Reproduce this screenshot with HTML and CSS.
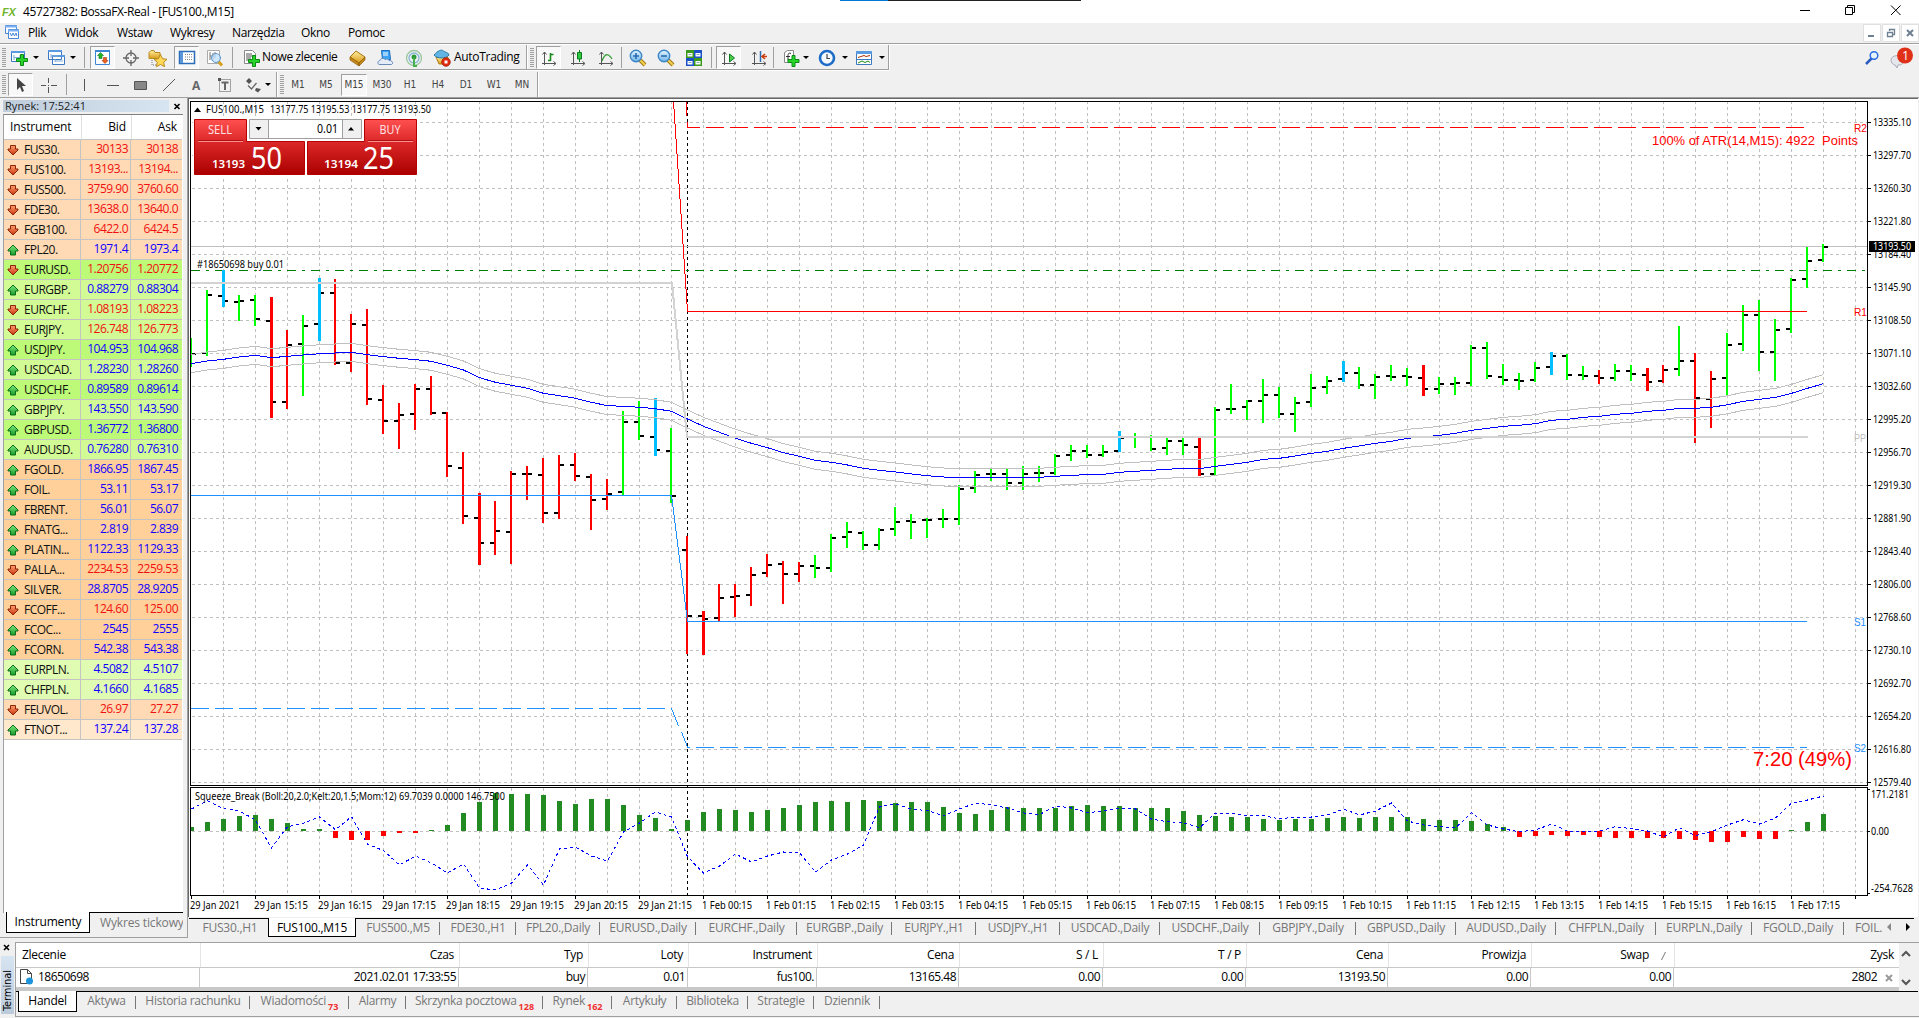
FILE: index.html
```html
<!DOCTYPE html>
<html lang="pl">
<head>
<meta charset="utf-8">
<title>45727382: BossaFX-Real - [FUS100.,M15]</title>
<link rel="stylesheet" href="styles.css">
</head>
<body>
<svg class="defs" width="0" height="0">
  <defs>
    <linearGradient id="gold" x1="0" y1="0" x2="0" y2="1"><stop offset="0" stop-color="#fff0a0"/><stop offset="1" stop-color="#d99a18"/></linearGradient>
    <linearGradient id="sky" x1="0" y1="0" x2="0" y2="1"><stop offset="0" stop-color="#e4f5ff"/><stop offset="1" stop-color="#6fb4ea"/></linearGradient>
    <linearGradient id="leaf" x1="0" y1="0" x2="0" y2="1"><stop offset="0" stop-color="#7fe87f"/><stop offset="1" stop-color="#189a28"/></linearGradient>
    <linearGradient id="fire" x1="0" y1="0" x2="0" y2="1"><stop offset="0" stop-color="#ffa070"/><stop offset="1" stop-color="#c8320a"/></linearGradient>
    <linearGradient id="deal" x1="0" y1="0" x2="0" y2="1"><stop offset="0" stop-color="#ff5050"/><stop offset=".4" stop-color="#dc2828"/><stop offset="1" stop-color="#ab0000"/></linearGradient>
    <symbol id="plus" viewBox="0 0 12 12"><path d="M4.5.5h3v4h4v3h-4v4h-3v-4h-4v-3h4z" fill="#28d428" stroke="#0a8a14"/></symbol>
    <symbol id="axes" viewBox="0 0 18 18"><path d="M4.500 3v13M2.500 5.500l2-2.500 2 2.500M2 14.500h13.500M13.500 12.500l2.500 2-2.500 2" fill="none" stroke="#555"/></symbol>
    <symbol id="up" viewBox="0 0 12 12"><path d="M6 1l5 5v1H8.500v4h-5V7H1V6z" fill="url(#leaf)" stroke="#0b6e1d"/></symbol>
    <symbol id="down" viewBox="0 0 12 12"><path d="M6 11l5-5V5H8.500V1.500h-5V5H1v1z" fill="url(#fire)" stroke="#8c2204"/></symbol>
    <symbol id="lens" viewBox="0 0 18 18"><path d="M11 11l5 5" stroke="#a07a18" stroke-width="4"/><path d="M11 11l5 5" stroke="#f4d050" stroke-width="2"/><circle cx="7" cy="7" r="5.700" fill="url(#sky)" stroke="#3c86c8" stroke-width="1.400"/></symbol>
  </defs>
</svg>

<header class="titlebar">
  <span class="logo">FX</span>
  <span class="caption">45727382: BossaFX-Real - [FUS100.,M15]</span>
  <span class="accent"></span><span class="accent-dark"></span>
  <svg class="winbtns" width="110" height="23"><path d="M7 10.500h10" stroke="#000"/><path d="M52.500 7.500h7v7h-7zM54.500 7.500v-2h7v7h-2" fill="none" stroke="#000"/><path d="M98 5.500l9.500 9.500M107.500 5.500L98 15" stroke="#000"/></svg>
</header>

<nav class="menubar">
  <svg width="28" height="20"><g fill="#fff" stroke="#4a86d8"><path d="M5.500 2.500h11v8h-11z"/><path d="M8.500 6.500h10v9h-10z"/></g><path d="M5 3.500h12M8 7.500h11" stroke="#7ab0f0" stroke-width="2"/><path d="M10 10l1.500 3 1.500-3 1.500 3 1.500-3 1 3" fill="none" stroke="#4a86d8"/></svg>
  <span>Plik</span><span>Widok</span><span>Wstaw</span><span>Wykresy</span><span>Narzędzia</span><span>Okno</span><span>Pomoc</span>
  <svg class="mdi" width="56" height="19"><g fill="#fff" stroke="#e0e0e0"><path d="M.5 1.500h17v17H.500zM19.500 1.500h17v17h-17zM38.500 1.500h17v17h-17z"/></g><path d="M5 13h6" stroke="#6d7f90" stroke-width="2"/><path d="M24.500 9.500h5v4h-5zM26.500 8V6.500h5v5H30M24 9.500h6M26 6.500h6" fill="none" stroke="#6d7f90" stroke-width="1.300"/><path d="M44 7l6 6M50 7l-6 6" stroke="#6d7f90" stroke-width="2"/></svg>
</nav>

<div class="toolbar row1">
  <i class="grip m2"></i>
  <svg class="ic m5"><path d="M.5 2.500h13v10H.500z" fill="#fff" stroke="#3c78c0"/><path d="M0 3h14" stroke="#5a9ae0" stroke-width="2"/><path d="M3 6v5M3 8.500h8M9 6v3" stroke="#7aa8d8"/><use href="#plus" x="5" y="5" width="12" height="12"/></svg>
  <i class="drop m4"></i>
  <svg class="ic m9"><path d="M.5 1.500h13v9H.500zM4.500 6.500h12v9h-12z" fill="#fff" stroke="#3c78c0"/><path d="M0 2h14M4 7h13" stroke="#5a9ae0" stroke-width="2"/><path d="M3 5v4M3 7h7M7 10v3M7 12h8" stroke="#7aa8d8"/></svg>
  <i class="drop m4"></i>
  <i class="sep m8"></i>
  <span class="pressed m5"><svg class="ic"><path d="M1.500 1.500h14v14h-14z" fill="#fff" stroke="#3c86d8"/><path d="M1 2h15" stroke="#3c86d8" stroke-width="2"/><path d="M6.500 3.500l3 3H8v3H5v-3H3.500z" fill="#28b428" stroke="#0b7a1d" stroke-width=".6"/><path d="M11 14.500l3-3h-1.500v-3h-3v3H8z" fill="#f06020" stroke="#a83008" stroke-width=".6"/></svg></span>
  <svg class="ic m7"><circle cx="9" cy="9" r="5" fill="none" stroke="#666" stroke-width="1.300"/><path d="M9 1v6M9 11v6M1 9h6M11 9h6" stroke="#666" stroke-width="1.300"/></svg>
  <svg class="ic w20 m8"><path d="M1 3.500l2-2h3l1 2h5v6H1z" fill="url(#gold)" stroke="#b88a20"/><path d="M4 11v5h5" fill="none" stroke="#777" stroke-dasharray="1 1"/><path d="M12.500 5.500l2 4.200 4.500.6-3.300 3 .9 4.400-4.100-2.200-4.100 2.200.9-4.400-3.300-3 4.500-.6z" fill="#ffd858" stroke="#b88a20"/></svg>
  <span class="pressed m6"><svg class="ic"><path d="M1.500 2.500h15v12h-15z" fill="#fff" stroke="#2c6cb8" stroke-width="1.500"/><path d="M3.500 3v11" stroke="#5a96d8" stroke-width="3"/><path d="M7 5.500h8M7 8h8M7 10.500h8" stroke="#888" stroke-dasharray="1 1"/></svg></span>
  <svg class="ic m7"><path d="M1.500 1.500h12v13h-12z" fill="#fff" stroke="#aaa"/><path d="M4 3v8M4 7h4M7 4v8M9 3v6" stroke="#777"/><path d="M12 12l4 4.500" stroke="#d8a020" stroke-width="3"/><circle cx="10" cy="9" r="4.500" fill="#bfe0ff" fill-opacity=".75" stroke="#5a9ad0"/></svg>
  <i class="sep m8"></i>
  <svg class="ic m10"><path d="M1.500 1.500h8l3 3v10h-11z" fill="#fff" stroke="#888"/><path d="M3 5h6M3 7h7M3 9h5M3 11h4" stroke="#555"/><use href="#plus" x="5" y="6" width="12" height="12"/></svg>
  <span class="label order m1">Nowe zlecenie</span>
  <svg class="ic m10"><path d="M1 8l6-6 9 6-6 6z" fill="url(#gold)" stroke="#a87410"/><path d="M1 8v3l9 6v-3zM10 14l6-6v3l-6 6z" fill="#c88a18" stroke="#8a5c08" stroke-width=".7"/></svg>
  <svg class="ic m10"><path d="M4.500 1.500h8l1 9h-8z" fill="#3ca4f4" stroke="#1c6cc0"/><path d="M6 4h5M6 6h5" stroke="#fff"/><path d="M2 15.500c-2-1-1-4 1-4 0-2 4-3 5-1 2-1 4 0 4 1 3-.5 5 3 2.500 4z" fill="#e4ecf8" stroke="#6a8ab8"/></svg>
  <svg class="ic m10"><g fill="none" stroke-width="1.300"><circle cx="9" cy="9" r="7.500" stroke="#9cc8a0"/><circle cx="9" cy="9" r="5" stroke="#86b4d8"/></g><circle cx="9" cy="8" r="2.500" fill="#2a9a3a"/><path d="M9 9v8h3" stroke="#46b04a" stroke-width="2" fill="none"/></svg>
  <svg class="ic m10"><path d="M3 8h12l-3 7H6z" fill="url(#gold)" stroke="#b07c10"/><path d="M1 6c2-2 4-4 5-4 2-2 5 0 6 1 2 0 4 2 4 3-3 4-12 4-15 0z" fill="#62b4e4" stroke="#2878a8"/><circle cx="13" cy="13" r="4.300" fill="#e02c10" stroke="#a01800" stroke-width=".7"/><path d="M11.500 11.500h3v3h-3z" fill="#fff"/></svg>
  <span class="label auto m3">AutoTrading</span>
  <i class="end m4"></i>
  <i class="grip m3"></i>
  <span class="pressed m2"><svg class="ic"><use href="#axes"/><path d="M10.500 4v8M8 11.500h2.500M10.500 5.500h3" stroke="#1a8a1a" stroke-width="1.600"/></svg></span>
  <svg class="ic m8"><use href="#axes"/><path d="M10.500 1v12" stroke="#0b7a1d"/><path d="M8.500 3.500h4v6.500h-4z" fill="#30c840" stroke="#0b7a1d"/></svg>
  <svg class="ic m10"><use href="#axes"/><path d="M5 12c3-8 6-8 10-2" fill="none" stroke="#3ca03c" stroke-width="1.300"/></svg>
  <i class="sep m6"></i>
  <svg class="ic m7"><use href="#lens"/><path d="M4 7h6M7 4v6" stroke="#2a6cb0" stroke-width="1.600"/></svg>
  <svg class="ic m10"><use href="#lens"/><path d="M4 7h6" stroke="#2a6cb0" stroke-width="1.600"/></svg>
  <svg class="ic m10"><path d="M1 1h8v8H1zM9 9h8v8H9z" fill="#3c9a1c"/><path d="M9 1h8v8H9zM1 9h8v8H1z" fill="#1c50c8"/><path d="M2.500 4h5v3.500h-5zM10.500 4h5v3.500h-5zM2.500 12h5v3.500h-5zM10.500 12h5v3.500h-5z" fill="#fff"/><path d="M3.500 5.500h3M11.500 5.500h3M3.500 13.500h3M11.500 13.500h3" stroke="#8ab"/></svg>
  <i class="sep m8"></i>
  <span class="pressed m4"><svg class="ic"><use href="#axes"/><path d="M9.500 5l5 4-5 4z" fill="#4ccc4c" stroke="#0b7a1d"/></svg></span>
  <svg class="ic m9"><use href="#axes"/><path d="M10.500 2v11" stroke="#2a6cb0" stroke-width="1.500"/><path d="M17 7.500h-4M15 5l-3 2.500 3 2.500" fill="none" stroke="#c83c10" stroke-width="1.500"/></svg>
  <i class="sep m5"></i>
  <svg class="ic m8"><path d="M2.500 3.500l3-2h6v12h-9z" fill="#fff" stroke="#888"/><path d="M9 4.500c-2-1-3 0-3 2v5M4 7.500h4" fill="none" stroke="#333"/><use href="#plus" x="5" y="6" width="13" height="12"/></svg>
  <i class="drop m3"></i>
  <svg class="ic m9"><circle cx="9" cy="9" r="7" fill="#f4f8ff" stroke="#1c6cc8" stroke-width="2.600"/><path d="M9 5v4.500h3" fill="none" stroke="#444" stroke-width="1.200"/></svg>
  <i class="drop m6"></i>
  <svg class="ic m7"><path d="M1.500 2.500h15v13h-15z" fill="#fff" stroke="#3c78c0"/><path d="M1 3.500h16" stroke="#5a9ae0" stroke-width="3"/><path d="M1 10.500h16" stroke="#3c78c0"/><path d="M3 8.500l3-1 3-1 2 1 4-1" fill="none" stroke="#a83008"/><path d="M3 14l4-2 3 1.500 3-1.500 2 1.500" fill="none" stroke="#1a8a1a"/></svg>
  <i class="drop m6"></i>
  <i class="end m3"></i>
  <svg class="corner" width="56" height="26"><path d="M2 20l6-6" stroke="#2a5cc0" stroke-width="2.500"/><circle cx="10" cy="11.500" r="3.800" fill="#e8f2ff" stroke="#2a6ce0" stroke-width="1.500"/><path d="M27 16c0-5 10-6 13-2 1 6-3 7-6 7l-1 3-2-3c-2-.5-4-2-4-5z" fill="#e4e6ec" stroke="#a8acb8"/><circle cx="41" cy="11.500" r="8" fill="#e03018"/><text x="38" y="16" font-size="12.500" fill="#fff">1</text></svg>
</div>

<div class="toolbar row2">
  <i class="grip m2"></i>
  <span class="pressed m2"><svg class="ic"><path d="M5 2v12l3-3 2 5 2-1-2-5h4z" fill="#444"/></svg></span>
  <svg class="ic m6"><path d="M9.500 2v5M9.500 11v6M2 9.500h5M12 9.500h6M9 9.500h1" stroke="#555"/></svg>
  <i class="sep m9"></i>
  <svg class="ic m8"><path d="M9.500 3v12" stroke="#555"/></svg>
  <svg class="ic m11"><path d="M3 9.500h12" stroke="#555"/></svg>
  <svg class="ic m9"><path d="M3.500 5.500h12v8h-12z" fill="#888" stroke="#555"/></svg>
  <svg class="ic m11"><path d="M3 15L15 3" stroke="#555"/></svg>
  <svg class="ic m10"><text x="4" y="14" font-size="12" font-weight="bold" fill="#666">A</text></svg>
  <svg class="ic m10"><path d="M3.500 3.500h11v12h-11z" fill="none" stroke="#555" stroke-dasharray="1 1"/><path d="M2 2h3v3H2z" fill="#555"/><path d="M5.500 6.500h7M9 6v8" stroke="#666" stroke-width="2"/></svg>
  <svg class="ic m10"><path d="M5 2l3 3-3 3-3-3zM12 12l5 1-3 3.500-3-2z" fill="#555"/><path d="M4 9.500l3.500 3.500 5-6" fill="none" stroke="#666" stroke-width="1.300"/></svg>
  <i class="drop m3"></i>
  <i class="end m5"></i>
  <i class="grip m3"></i>
  <span class="tf">M1</span><span class="tf">M5</span><span class="tf on">M15</span><span class="tf">M30</span><span class="tf">H1</span><span class="tf">H4</span><span class="tf">D1</span><span class="tf">W1</span><span class="tf">MN</span>
  <i class="end m1"></i>
</div>

<main class="work">
  <aside class="market">
    <div class="market-title"><span>Rynek: 17:52:41</span><svg width="18" height="13"><path d="M5.500 4l5 5M10.500 4l-5 5" stroke="#000" stroke-width="1.600"/></svg></div>
    <div class="market-list">
      <div class="quote head"><span>Instrument</span><span>Bid</span><span>Ask</span></div>
      <div id="quotes"></div>
    </div>
    <div class="market-tabs"><span class="active">Instrumenty</span><span>Wykres tickowy</span></div>
  </aside>
  <section class="window">
    <svg id="chart" width="1729" height="818" viewBox="189 99 1729 818"></svg>
    <div class="chart-tabs">
      <span>FUS30.,H1</span><span class="active">FUS100.,M15</span><span>FUS500.,M5</span><span>FDE30.,H1</span><span>FPL20.,Daily</span><span>EURUSD.,Daily</span><span>EURCHF.,Daily</span><span>EURGBP.,Daily</span><span>EURJPY.,H1</span><span>USDJPY.,H1</span><span>USDCAD.,Daily</span><span>USDCHF.,Daily</span><span>GBPJPY.,Daily</span><span>GBPUSD.,Daily</span><span>AUDUSD.,Daily</span><span>CHFPLN.,Daily</span><span>EURPLN.,Daily</span><span>FGOLD.,Daily</span><span class="last">FOIL.</span>
      <svg width="32" height="18"><path d="M9 4v8L5 8z" fill="#888"/><path d="M24 4v8l4-4z" fill="#000"/></svg>
    </div>
  </section>
</main>

<section class="terminal">
  <div class="strip"><svg width="13" height="12"><path d="M3 3l5 5M8 3L3 8" stroke="#000" stroke-width="1.600"/></svg><span>Terminal</span></div>
  <div class="panel">
    <div class="orders">
      <div class="trow thead"><span>Zlecenie</span><span>Czas</span><span>Typ</span><span>Loty</span><span>Instrument</span><span>Cena</span><span>S / L</span><span>T / P</span><span>Cena</span><span>Prowizja</span><span class="swap">Swap<svg width="5" height="10"><path d="M.5 9l4-8" stroke="#777"/></svg></span><span>Zysk</span></div>
      <div class="trow"><span><svg width="15" height="18"><path d="M1.500 1.500h7l4 4v10h-11z" fill="#fff" stroke="#444"/><path d="M8.500 1.500v4h4" fill="none" stroke="#444"/><circle cx="10.500" cy="13" r="3.500" fill="#1c94dc"/></svg>18650698</span><span>2021.02.01 17:33:55</span><span>buy</span><span>0.01</span><span>fus100.</span><span>13165.48</span><span>0.00</span><span>0.00</span><span>13193.50</span><span>0.00</span><span>0.00</span><span>2802<svg width="20" height="18"><path d="M9 7l6 6M15 7l-6 6" stroke="#999" stroke-width="2"/></svg></span></div>
      <div class="filler"></div>
      <svg class="scroll" width="17" height="48"><path d="M4 13l4-4 4 4M4 37l4 4 4-4" fill="none" stroke="#555" stroke-width="2"/></svg>
    </div>
    <div class="term-tabs">
      <span class="active">Handel</span><span>Aktywa</span><span>Historia rachunku</span><span>Wiadomości<b>73</b></span><span>Alarmy</span><span>Skrzynka pocztowa<b>128</b></span><span>Rynek<b>162</b></span><span>Artykuły</span><span>Biblioteka</span><span>Strategie</span><span>Dziennik</span>
    </div>
  </div>
</section>
<script src="chart.js"></script>
</body>
</html>
```
FILE: styles.css
```css
* { box-sizing: border-box; }
body {
  margin: 0; width: 1919px; height: 1018px; overflow: hidden;
  display: flex; flex-direction: column;
  background: #f0f0f0; color: #000;
  font: 12px/16px "Open Sans", "Noto Sans", sans-serif;
  letter-spacing: -.35px;
}
svg { flex: none; display: block; }
.defs { position: absolute; }

.titlebar { height: 23px; background: #fff; display: flex; align-items: center; position: relative; flex: none; }
.logo { width: 21px; padding-left: 2px; font: italic bold 11px/16px "Liberation Sans", sans-serif; color: #6fb52c; letter-spacing: -.2px; }
.caption { padding: 0 0 0 2px; flex: 1; letter-spacing: -.4px; }
.accent { position: absolute; left: 840px; top: 0; width: 48px; height: 1px; background: #0078d7; }
.accent-dark { position: absolute; left: 888px; top: 0; width: 193px; height: 1px; background: #222; }
.winbtns { margin-right: 16px; }

.menubar { height: 20px; flex: none; display: grid; grid-template-columns: 28px 37px 52px 53px 62px 69px 47px 1fr 56px; }
.menubar span { line-height: 20px; }
.mdi { margin-left: auto; }

.toolbar { flex: none; display: flex; align-items: center; border-top: 1px solid #a0a0a0; height: 27px; position: relative; }
.row1 { box-shadow: inset 0 1px #fff; }
.row1::after { content: ""; position: absolute; left: 0; bottom: -1px; width: 889px; height: 2px; background: linear-gradient(#a0a0a0 50%, #fff 50%); }
.row2 { height: 27px; border-top: 0; padding-top: 2px; }
.ic { width: 18px; height: 18px; }
.row1 .ic { position: relative; top: 1px; }
.w20 { width: 20px; }
.grip { flex: none; width: 4px; height: 19px; background: repeating-linear-gradient(#a0a0a0 0 1px, #f0f0f0 1px 2px); }
.drop { flex: none; width: 6px; height: 3px; border: 3px solid transparent; border-top-color: #000; border-bottom: 0; }
.sep { flex: none; width: 1px; height: 21px; background: #a0a0a0; }
.end { flex: none; width: 2px; height: 25px; margin-right: -1px !important; background: linear-gradient(90deg, #a0a0a0 50%, #fff 50%); }
.pressed { flex: none; width: 25px; height: 23px; display: flex; align-items: center; justify-content: center; background: #f8f8f8; border: 1px solid; border-color: #a0a0a0 #fff #fff #a0a0a0; }
.label { flex: none; white-space: nowrap; }
.order { width: 77px; letter-spacing: -.38px; }
.auto { width: 68px; letter-spacing: -.3px; }
.corner { margin-left: auto; margin-right: -1px; }
.tf { flex: none; width: 28px; height: 22px; font: 10px/22px "DejaVu Sans Condensed", "DejaVu Sans", sans-serif; letter-spacing: -.1px; text-align: center; color: #444; }
.tf.on { width: 26px; margin: 0 1px; line-height: 20px; background: #f8f8f8; border: 1px solid; border-color: #a0a0a0 #fff #fff #a0a0a0; }
.m1 { margin-left: 1px; } .m2 { margin-left: 2px; } .m3 { margin-left: 3px; } .m4 { margin-left: 4px; }
.m5 { margin-left: 5px; } .m6 { margin-left: 6px; } .m7 { margin-left: 7px; } .m8 { margin-left: 8px; }
.m9 { margin-left: 9px; } .m10 { margin-left: 10px; } .m11 { margin-left: 11px; }

.work { flex: none; height: 841px; display: flex; }
.market { width: 187px; padding: 2px 0 0 3px; display: flex; flex-direction: column; border-top: 1px solid #a0a0a0; border-bottom: 1px solid #a0a0a0; }
.market-title { height: 12px; display: flex; justify-content: space-between; }
.market-title span { width: 166px; padding-left: 2px; line-height: 12px; font-size: 11px; letter-spacing: .05px; color: #222; background: linear-gradient(90deg, #bfcddb, #d7e4f2); }
.market-title svg { margin-right: 0; }
.market-list { width: 180px; height: 799px; margin-top: 2px; background: #fff; border-left: 1px solid #a0a0a0; border-top: 1px solid #808080; overflow: hidden; }
.quote { width: 178px; height: 20px; display: grid; grid-template-columns: 77px 50px 51px; border-bottom: 1px solid #c4c4c4; font-size: 12px; letter-spacing: -.5px; }
.quote > * { line-height: 18px; text-align: right; padding-right: 2px; border-right: 1px solid #c4c4c4; white-space: nowrap; }
.quote > :first-child { display: flex; text-align: left; align-items: center; padding-left: 3px; }
.quote > :last-child { border-right: 0; padding-right: 4px; }
.quote .sym { padding-left: 5px; }
.quote.rise { color: #10f; } .quote.fall { color: #f01010; }
.quote .sym { color: #111; }
.quote.head { height: 25px; grid-template-columns: 78px 50px 50px; font-size: 12px; letter-spacing: -.1px; }
.quote.head > * { line-height: 24px; padding-right: 5px; border-right-color: #e0e0e0; }
.quote.head > :first-child { padding-left: 6px; }
.bg0 { background: #ffdab4; } .bg1 { background: #bdfa77; } .bg2 { background: #d2fb96; }
.bg3 { background: #ffd09a; } .bg4 { background: #e0fbb2; } .bg5 { background: #ffe8cc; }
.market-tabs { height: 21px; margin-top: -1px; display: flex; position: relative; }
.market-tabs span { padding-left: 10px; line-height: 19px; color: #777; border-top: 1px solid #000; white-space: nowrap; width: 93px; overflow: hidden; letter-spacing: -.15px; }
.market-tabs .active { width: 84px; margin-left: 3px; padding: 0; text-align: center; color: #000; background: #fff; border: 1px solid #000; border-top: 0; }

.window { width: 1732px; display: flex; flex-direction: column; border-left: 1px solid #a0a0a0; border-top: 1px solid #a0a0a0; }
#chart { border: 0; background: #fff; outline: 1px solid #696969; clip-path: inset(-1px 0 0 -1px); margin: 1px 0 0 1px; }
#chart text { font-family: "Noto Sans", "Open Sans", sans-serif; letter-spacing: 0; }
#chart .arial { font-family: "Liberation Sans", sans-serif; }
.chart-tabs { height: 19px; margin-top: 1px; margin-left: 1px; display: grid; grid-template-columns: 79px 88px 84px 76px 84px 96px 101px 95px 84px 84px 100px 100px 96px 100px 100px 100px 96px 92px 38px 32px; color: #777; }
.chart-tabs > * { border-top: 1px solid #000; }
.chart-tabs span { line-height: 17px; text-align: center; white-space: nowrap; overflow: hidden; letter-spacing: -.25px; background: linear-gradient(#777, #777) right 3px / 1px 13px no-repeat; }
.chart-tabs span:first-child, .chart-tabs .last { background: none; }
.chart-tabs span:first-child { padding-left: 3px; }
.chart-tabs .last { text-align: left; padding-left: 11px; }
.chart-tabs .active { background: #fff; color: #000; border: 1px solid #000; border-top: 0; line-height: 17px; padding-top: 1px; }

.terminal { flex: none; height: 74px; margin-top: 4px; display: flex; }
.strip { width: 15px; display: flex; flex-direction: column; padding-left: 1px; }
.strip span { height: 58px; width: 13px; margin-top: 2px; writing-mode: vertical-rl; transform: rotate(180deg); font: 11px/13px "DejaVu Sans Condensed", "DejaVu Sans", sans-serif; letter-spacing: -.1px; text-align: left; padding-top: 3px; background: linear-gradient(#bccbdc, #d7e4f2); }
.panel { flex: 1; border-left: 1px solid #a0a0a0; border-top: 1px solid #a0a0a0; border-bottom: 1px solid #a0a0a0; height: 75px; }
.orders { position: relative; width: 1899px; height: 48px; }
.trow { width: 1883px; height: 25px; background: #fff; display: grid; grid-template-columns: 184px 259px 129px 100px 129px 142px 144px 143px 142px 143px 143px 225px; }
.trow > * { height: 19px; line-height: 17px; display: flex; justify-content: flex-end; padding-right: 2px; border-right: 1px solid #c8c8c8; letter-spacing: -.5px; white-space: nowrap; }
.trow + .trow { height: 19px; }
.trow > :first-child { justify-content: flex-start; padding-left: 3px; gap: 4px; }
.trow > :last-child { border-right: 0; }
.thead { border-bottom: 1px solid #c8c8c8; }
.trow.thead > * { height: 24px; line-height: 23px; padding-right: 5px; border-right-color: #e4e4e4; letter-spacing: -.3px; }
.thead { grid-template-columns: 185px 259px 129px 100px 129px 142px 144px 143px 142px 143px 143px 224px; }
.thead > :first-child { padding-left: 6px; }
.trow.thead .swap { padding-right: 8px; }
.thead .swap svg { margin: 8px 0 0 12px; }
.filler { height: 4px; width: 1883px; background: #c8c8c8; }
.scroll { position: absolute; right: 0; top: 0; }
.term-tabs { display: flex; height: 21px; width: 1902px; color: #777; border-top: 1px solid #000; padding-left: 2px; }
.term-tabs span { line-height: 17px; text-align: center; white-space: nowrap; letter-spacing: -.27px; background: linear-gradient(#777, #777) right 4px / 1px 13px no-repeat; }
.term-tabs .active { background: #fff; color: #000; border: 1px solid #000; border-top: 0; margin-top: -1px; padding-top: 1px; width: 59px; }
.term-tabs b { color: #f03030; font-size: 9px; position: relative; top: 5px; margin-left: 2px; letter-spacing: 0; }
.term-tabs :nth-child(2) { width: 59px; } .term-tabs :nth-child(3) { width: 114px; }
.term-tabs :nth-child(4) { width: 99px; } .term-tabs :nth-child(5) { width: 57px; }
.term-tabs :nth-child(6) { width: 137px; } .term-tabs :nth-child(7) { width: 69px; }
.term-tabs :nth-child(8) { width: 65px; } .term-tabs :nth-child(9) { width: 71px; }
.term-tabs :nth-child(10) { width: 66px; } .term-tabs :nth-child(11) { width: 66px; }
```
FILE: chart.js
```js
// Market watch: symbol, bid, ask, direction, row tint
const quotes = `FUS30. 30133 30138 d 0|FUS100. 13193... 13194... d 0|FUS500. 3759.90 3760.60 d 0|FDE30. 13638.0 13640.0 d 0|FGB100. 6422.0 6424.5 d 0|FPL20. 1971.4 1973.4 u 0|EURUSD. 1.20756 1.20772 d 1|EURGBP. 0.88279 0.88304 u 2|EURCHF. 1.08193 1.08223 d 2|EURJPY. 126.748 126.773 d 2|USDJPY. 104.953 104.968 u 1|USDCAD. 1.28230 1.28260 u 2|USDCHF. 0.89589 0.89614 u 1|GBPJPY. 143.550 143.590 u 2|GBPUSD. 1.36772 1.36800 u 1|AUDUSD. 0.76280 0.76310 u 2|FGOLD. 1866.95 1867.45 u 3|FOIL. 53.11 53.17 u 3|FBRENT. 56.01 56.07 u 3|FNATG... 2.819 2.839 u 3|PLATIN... 1122.33 1129.33 u 3|PALLA... 2234.53 2259.53 d 3|SILVER. 28.8705 28.9205 u 3|FCOFF... 124.60 125.00 d 3|FCOC... 2545 2555 u 3|FCORN. 542.38 543.38 u 3|EURPLN. 4.5082 4.5107 u 4|CHFPLN. 4.1660 4.1685 u 4|FEUVOL. 26.97 27.27 d 0|FTNOT... 137.24 137.28 u 5`;
document.getElementById('quotes').innerHTML = quotes.split('|').map(row => {
  const [sym, bid, ask, dir, tint] = row.split(' ');
  const up = dir === 'u';
  return `<div class="quote bg${tint} ${up ? 'rise' : 'fall'}"><span><svg width="12" height="12"><use href="#${up ? 'up' : 'down'}"/></svg><span class="sym">${sym}</span></span><span>${bid}</span><span>${ask}</span></div>`;
}).join('');

// Bars: high, low, open, close, colour (g/r/b thin, R/B thick)
const bars = `338 367 0 353 g|290 356 352 294 g|270 307 295 300 B|295 321 301 300 g|295 326 299 318 g|297 418 320 401 R|330 409 401 344 r|315 396 343 325 g|278 341 323 292 B|279 365 292 362 r|314 372 362 323 r|309 405 324 398 r|385 434 399 420 r|403 449 420 414 r|384 430 413 388 r|376 415 388 412 r|412 477 412 465 r|452 524 467 515 r|493 565 517 542 R|501 555 542 530 r|471 564 531 473 r|466 500 473 473 r|458 523 474 512 r|455 519 512 464 r|453 481 464 475 r|474 530 476 499 r|479 510 498 493 r|411 495 491 421 g|401 440 421 435 g|398 456 436 449 B|428 503 450 495 g|536 654 549 615 r|611 655 615 618 R|584 621 617 597 r|584 617 596 595 r|567 606 594 574 r|554 577 572 564 r|561 604 563 573 r|562 582 573 565 r|555 578 565 567 g|534 572 567 537 g|522 548 536 531 g|531 550 532 544 g|528 550 544 529 g|507 536 528 521 g|514 539 520 521 g|518 538 519 519 g|509 528 518 518 g|485 525 518 488 g|471 493 487 474 g|469 481 473 473 g|469 490 473 482 g|466 490 482 473 g|466 482 472 472 g|454 475 472 455 g|445 461 454 450 g|445 458 450 454 g|445 457 454 451 g|431 452 450 437 B|433 448 436 436 g|435 451 436 448 g|438 455 447 440 g|438 455 440 444 g|438 476 446 473 R|407 475 473 409 g|384 414 408 408 g|400 420 406 400 g|379 423 400 394 g|387 418 394 413 g|397 432 413 402 g|374 407 401 387 g|376 394 386 380 g|361 382 378 372 B|367 389 372 384 g|374 399 384 376 g|365 381 375 376 g|368 386 375 376 g|365 396 377 388 R|377 394 388 383 g|377 395 383 382 g|345 386 382 347 g|342 379 347 375 g|364 385 376 379 g|373 390 379 380 g|362 382 379 367 g|352 375 366 355 B|354 380 355 374 g|366 380 374 375 g|370 384 375 377 r|364 381 377 370 g|365 381 370 373 g|368 391 374 381 R|365 383 380 369 r|326 376 368 360 g|353 443 360 397 r|371 428 398 378 r|333 396 377 344 g|305 351 343 314 g|300 371 314 351 g|319 381 351 329 g|278 333 328 279 g|247 288 278 260 g|244 262 259 246 g`.split('|').map(s => s.split(' '));

// Moving average level at each bar; the envelope runs 9px either side
const ma = [363.5,361,359.3,357,355.3,357.7,356.3,355,353.7,353,352.3,354.7,356.7,358.3,359.7,361.3,365.3,370,377.7,382.3,385.3,388.3,393.3,395.7,398.3,402.3,405.7,406.3,407.3,408.7,411.3,419,426.3,432.3,438.3,443.3,447.7,452.7,456.3,460.3,462.3,465,468.3,470.3,472,474,475.7,477,477.3,477.3,477.3,477.3,477.3,477.3,476.3,475.3,474.7,474.3,472.3,471.3,470.3,469.3,468.3,468.7,466.3,464.3,462.3,459.3,458.3,456,453.3,451.3,448.3,446,443.3,441.3,438.3,437,435.3,433.3,430.3,428.3,426.3,425.3,423.7,420.3,419.3,417.3,416.3,414.3,413.3,411.3,410.3,408.3,408.3,407.3,404.7,401.3,399.3,397.3,393.3,388.3,383.7];

// Squeeze_Break histogram edge and momentum line
const hist = [827,822,819,816,815,819,823,829,829,838,840,840,836,833,833,830,825,813,802,793,794,794,795,801,804,799,799,805,815,818,829,820,812,809,810,812,810,808,805,802,801,802,800,801,803,802,802,807,813,814,810,807,808,808,808,806,805,806,806,808,808,808,811,815,816,817,817,819,820,819,819,818,817,818,817,817,817,819,820,820,821,824,827,837,836,835,836,835,837,838,838,838,838,839,840,842,842,837,839,839,830,822,814];
const mom = [809,800.7,808.7,811,820,848,826.7,823.3,817,829.7,816.7,844,850.7,865,856,863,873,864,888,890,883,864.7,885,849,847,856,861,832,823,812,817,856.7,873,866,854,862,856,852,852.7,872,860,854,845,806.7,804,809,810.7,815.7,809,803,805,808,813,814.7,806,808,812.7,811,808,809,819,821.7,822.7,827.7,813,813,815.7,815.7,819,817,817,815,809,815,811,803,821,825,826.7,828,812.7,825,829,831.7,830,824,831,831,831,826.7,828.7,831,837,827.7,835.7,831.7,825,819.7,824,818,803,800,796];

const X = i => 191 + 16 * i;
const color = { g: '#0f0', r: '#f00', b: '#00bfff' };
const out = [];
const rect = (x, y, w, h, fill) => out.push(`<rect x="${x}" y="${y}" width="${w}" height="${h}" fill="${fill}"/>`);
const line = (d, stroke, dash = '', w = 1, off = 0) => out.push(`<path d="${d}" fill="none" stroke="${stroke}" stroke-width="${w}" stroke-dasharray="${dash}" stroke-dashoffset="${off}"/>`);
const text = (x, y, s, len, size = 10, fill = '#000', extra = '') => out.push(`<text x="${x}" y="${y}" font-size="${size}" fill="${fill}" textLength="${len}" lengthAdjust="spacingAndGlyphs" xml:space="preserve" ${extra}>${s}</text>`);
const curve = (pts, dy = 0) => 'M' + pts.map((y, i) => `${X(i) + .5} ${y + dy}`).join('L');

out.push('<g shape-rendering="crispEdges">');
for (let x = 223; x < 1867; x += 32) line(`M${x + .5} 101V785M${x + .5} 788V895`, '#c0c0c0', '3 3');
for (let y = 122; y < 785; y += 33) line(`M192 ${y + .5}H1867`, '#c0c0c0', '3 3');
line('M192 831.500H1867', '#c0c0c0', '3 3');
line('M687.500 101V895', '#000', '3 3');
line('M191 246.500H1867', '#c0c0c0');
line('M191 270.500H1867', '#008000', '9 6 3 6');

bars.forEach(([h, l, o, c, k], i) => {
  const x = X(i), thick = k < 'a';
  if (+o) rect(x - 5, o, 4, 2, '#000');
  rect(x + 1, c, 4, 2, '#000');
  rect(Math.max(x - 1, 191), h, thick ? 3 : i ? 2 : 1, l - h, color[k.toLowerCase()]);
});
line(curve(ma, -9), '#c0c0c0');
line(curve(ma, 9), '#c0c0c0');
line(curve(ma), '#00f');

line('M191 283H672L687 437H1808', '#d3d3d3', '', 2);
line('M673.500 101L687.500 311.500H1807', '#f00');
line('M686.500 101V116M687.500 122V127', '#f00');
line('M687 127.500H1804', '#f00', '18 6', 1, 5);
line('M191 495.500H671.500L687.500 621.500H1807', '#1e90ff');
line('M191 708.500H671', '#1e90ff', '18 6');
line('M671.500 708.500L678.500 726M681.500 732L687.500 747', '#1e90ff');
line('M687 747.500H1807', '#1e90ff', '18 6', 1, 15);

hist.forEach((y, i) => {
  const up = y < 831, x = Math.max(X(i) - 2, 191), w = X(i) + 3 - x;
  up ? rect(x, y, w, 831 - y, '#228b22') : rect(x, 831, w, y - 831, '#f00');
});
line(curve(mom), '#00f', '3 3');

line('M190.500 101.500H1867.500V785.500H190.500zM190.500 787.500H1867.500V895.500H190.500z', '#000');
for (let i = 0; i < 21; i++) rect(1868, 122 + 33 * i, 3, 1, '#000');
rect(1868, 789, 2, 1, '#000'); rect(1868, 831, 2, 1, '#000'); rect(1868, 893, 2, 1, '#000');
for (let x = 191; x < 1867; x += 64) rect(x, 896, 1, 3, '#000');
out.push('</g>');

const prices = '13335.10 13297.70 13260.30 13221.80 13184.40 13145.90 13108.50 13071.10 13032.60 12995.20 12956.70 12919.30 12881.90 12843.40 12806.00 12768.60 12730.10 12692.70 12654.20 12616.80 12579.40'.split(' ');
prices.forEach((p, i) => text(1873, 126 + 33 * i, p, 38));
rect(1869, 241, 46, 11, '#000');
text(1873, 250, '13193.50', 38, 10, '#fff');
text(1871, 798, '171.2181', 38); text(1871, 835, '0.00', 18); text(1871, 892, '-254.7628', 42);
text(190, 908.500, '29 Jan 2021', 50);
for (let i = 1; i < 8; i++) text(190 + 64 * i, 908.500, `29 Jan ${14 + i}:15`, 54);
for (let i = 0; i < 18; i++) text(702 + 64 * i, 908.500, `1 Feb ${String(i).padStart(2, '0')}:15`, 50);

out.push('<path d="M194 112l3.500-4.500 3.500 4.500z"/>');
text(206, 113, 'FUS100.,M15', 58); text(270, 113, '13177.75 13195.53 13177.75 13193.50', 161);
text(197, 268, '#18650698 buy 0.01', 87);
text(195, 800, 'Squeeze_Break (Boll:20,2.0;Kelt:20,1.5;Mom:12) 69.7039 0.0000 146.7500', 310);
text(1652, 145, '100% of ATR(14,M15): 4922  Points', 206, 13.500, '#f00', 'class="arial"');
text(1753, 766, '7:20 (49%)', 99, 20, '#f00', 'class="arial"');
text(1854, 132, 'R2', 13, 11, '#f00', 'class="arial"');
text(1854, 316, 'R1', 13, 11, '#f00', 'class="arial"');
text(1854, 442, 'PP', 12, 11, '#c0c0c0', 'class="arial"');
text(1854, 626, 'S1', 12, 11, '#1e90ff', 'class="arial"');
text(1854, 752, 'S2', 12, 11, '#1e90ff', 'class="arial"');

// One-click trading panel
out.push(`<rect x="193" y="117" width="226" height="59" fill="#fff"/>
<g fill="url(#deal)" stroke="#b40000"><path d="M194.500 119.500h52v22h58v33h-110z"/><path d="M364.500 119.500h52v55h-109v-33h57z"/></g>
<path d="M198 140.500h45M368 140.500h45" stroke="#b01010"/><path d="M198 141.500h45M368 141.500h45" stroke="#ff9090"/>
<g fill="#fff" stroke="#a0a0a0"><path d="M249.500 119.500h112v19h-112z"/><path d="M250 120h18v18h-18zM343 120h18v18h-18z" fill="#f0f0f0" stroke="none"/><path d="M268.500 120v18M342.500 120v18"/></g>
<path d="M255.500 127h6l-3 3.500zM348 130.500h6l-3-3.500z"/>`);
text(208, 134, 'SELL', 24, 12, '#ffe0e0'); text(379.500, 134, 'BUY', 21, 12, '#ffe0e0');
text(317, 133, '0.01', 21, 12);
text(212, 168, '13193', 33, 11, '#fff', 'font-weight="600"'); text(324, 168, '13194', 34, 11, '#fff', 'font-weight="600"');
text(251, 168.500, '50', 31, 30, '#fff'); text(363, 168.500, '25', 31, 30, '#fff');

document.getElementById('chart').innerHTML = out.join('');
```
